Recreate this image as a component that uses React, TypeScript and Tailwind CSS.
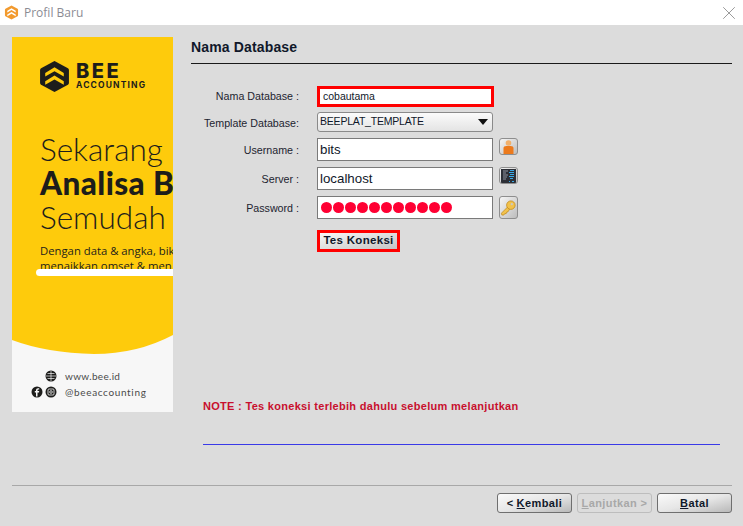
import React from 'react'
import { X } from 'lucide-react'

const arial = { fontFamily: '"Liberation Sans", Arial, sans-serif' }

function BeeMark({ size, body, chevron }: { size: number; body: string; chevron: string }) {
  return (
    <svg width={size} height={size} viewBox="0 0 32 32" className="shrink-0">
      <path d="M16 1 L29 8 Q30 8.600 30 10 L30 22 Q30 23.400 29 24 L16 31 L3 24 Q2 23.400 2 22 L2 10 Q2 8.600 3 8 Z" fill={body} />
      <path d="M16 7 L25 12.500 L25 16 L16 10.800 L7 16 L7 12.500 Z" fill={chevron} />
      <path d="M16 15 L25 20.500 L25 24 L16 18.800 L7 24 L7 20.500 Z" fill={chevron} />
    </svg>
  )
}

function UserIcon() {
  return (
    <svg width="11" height="14" viewBox="0 0 11 14">
      <circle cx="5.500" cy="3" r="2.800" fill="#f2b06a" />
      <path d="M0.500 14 L0.500 8 Q0.500 6 3.500 6 L7.500 6 Q10.500 6 10.500 8 L10.500 14 Z" fill="#ec7a1c" />
    </svg>
  )
}

function ServerIcon() {
  return (
    <svg width="15" height="14" viewBox="0 0 15 14">
      <rect width="15" height="14" fill="#2c2f36" />
      <path d="M2 2h5M2 4h3M2 6h5M2 8h4M2 10h3" stroke="#8d929c" strokeWidth="1" />
      <path d="M9 1.500h4M8 3.500h5M9 5.500h4M8 7.500h5M9 9.500h3M8 12.500h1M11 12.500h2" stroke="#39a9e6" strokeWidth="1" />
    </svg>
  )
}

function KeyIcon() {
  return (
    <svg width="18" height="18" viewBox="0 0 18 18">
      <path d="M8 8 L1.500 14.500 L2 16.500 L4 16.500 L5 15 L6.500 15 L7 13.500 L8.500 13 L10 10.500 Z" fill="#f2c24b" stroke="#c08a1e" strokeWidth="0.800" />
      <circle cx="11.500" cy="6" r="4.500" fill="#f2c24b" stroke="#c08a1e" strokeWidth="0.800" />
      <circle cx="12.500" cy="5" r="1.200" fill="#c9c9c9" />
    </svg>
  )
}

function SideButton({ children, tall }: { children: React.ReactNode; tall?: boolean }) {
  return (
    <div className={`w-[19px] ${tall ? 'h-[23px]' : 'h-[17px]'} self-start flex items-center justify-center overflow-hidden rounded-[3px] border border-[#8e8e8e] bg-gradient-to-br from-[#f6f6f6] to-[#bdbdbd] ml-[6px]`}>
      {children}
    </div>
  )
}

function Label({ children, nudge }: { children: React.ReactNode; nudge?: boolean }) {
  return (
    <div className={`w-[101px] text-right text-[10.700px] text-[#1d2430] pr-[1px] whitespace-nowrap ${nudge ? 'pt-[2px]' : ''}`}>
      {children}
    </div>
  )
}

function FieldRow({ label, value, icon, mt }: { label: string; value?: React.ReactNode; icon: React.ReactNode; mt: string }) {
  return (
    <div className={`flex items-center ${mt}`}>
      <Label nudge>{label}</Label>
      <div className="ml-[17px] w-[176px] h-[23px] border border-[#7a7a7a] bg-white flex items-center pl-[2px] text-[13.300px] text-[#10182a]">
        {value}
      </div>
      {icon}
    </div>
  )
}

function WizardButton({ children, w, disabled }: { children: React.ReactNode; w: string; disabled?: boolean }) {
  return (
    <div
      className={`${w} h-[20px] flex items-center justify-center rounded-[3px] border text-[11px] font-bold tracking-[0.4px] ${
        disabled
          ? 'border-[#bdbdbd] text-[#a8a8a8]'
          : 'border-[#6f6f6f] text-[#10182a] bg-gradient-to-br from-[#fafafa] via-[#e6e6e6] to-[#b9b9b9]'
      }`}
    >
      {children}
    </div>
  )
}

function Banner() {
  return (
    <div className="w-[161px] h-[375px] shrink-0 overflow-hidden bg-[#fecb0c] flex flex-col text-[#1d1d1b] whitespace-nowrap">
      <div className="flex items-center pl-[26px] pt-[23px]">
        <BeeMark size={33} body="#1d1d1b" chevron="#fecb0c" />
        <div className="ml-[5px]">
          <div className="text-[20px] leading-[18px] font-extrabold tracking-[2.500px]" style={{ fontFamily: 'Inter, sans-serif' }}>BEE</div>
          <div className="text-[8.500px] leading-[11px] font-bold tracking-[1.150px]" style={{ fontFamily: 'Inter, sans-serif' }}>ACCOUNTING</div>
        </div>
      </div>
      <div className="mt-[39px] pl-[28px] text-[31.500px] leading-[34px] overflow-hidden" style={{ fontFamily: 'Lato, sans-serif' }}>
        <div className="font-light">Sekarang</div>
        <div className="font-black tracking-[0.4px]">Analisa B</div>
        <div className="font-light">Semudah</div>
      </div>
      <div className="mt-[9px] pl-[28px] text-[11.300px] leading-[15px]" style={{ fontFamily: '"Open Sans", sans-serif' }}>
        <div>Dengan data &amp; angka, bik</div>
        <div>menaikkan omset &amp; men</div>
      </div>
      <div className="h-[7px] -mt-[4px] ml-[24px] rounded-l-full bg-white" />
      <svg viewBox="0 0 161 24" className="w-[161px] h-[24px] mt-auto shrink-0 block" preserveAspectRatio="none">
        <path d="M0 10 Q35 23 82 24 Q125 24 161 5 L161 24 L0 24 Z" fill="#f7f7f7" />
      </svg>
      <div className="h-[58px] shrink-0 bg-[#f7f7f7] text-[10px] text-[#4a4a4a] pt-[14px]" style={{ fontFamily: 'Lato, sans-serif' }}>
        <div className="flex items-center h-[16px] pl-[33px] tracking-[0.3px]">
          <svg width="12" height="12" viewBox="0 0 12 12" className="shrink-0">
            <circle cx="6" cy="6" r="5.500" fill="#1d1d1b" />
            <path d="M1 6h10M6 1v10M2.500 3.500h7M2.500 8.500h7" stroke="#f7f7f7" strokeWidth="0.700" />
          </svg>
          <span className="ml-[8px]">www.bee.id</span>
        </div>
        <div className="flex items-center h-[16px] pl-[19px] tracking-[0.65px]">
          <svg width="26" height="12" viewBox="0 0 26 12" className="shrink-0">
            <circle cx="6" cy="6" r="5.500" fill="#1d1d1b" />
            <path d="M6.500 10.500 V6.500 H8 L8.200 5 H6.500 V4.200 Q6.500 3.500 7.300 3.500 H8.200 V2.200 H7 Q5 2.200 5 4 V5 H3.800 V6.500 H5 V10.500 Z" fill="#f7f7f7" />
            <circle cx="20" cy="6" r="5.500" fill="#1d1d1b" />
            <rect x="17" y="3" width="6" height="6" rx="1" fill="none" stroke="#f7f7f7" strokeWidth="0.800" />
            <circle cx="20" cy="6" r="1.300" fill="none" stroke="#f7f7f7" strokeWidth="0.800" />
          </svg>
          <span className="ml-[8px]">@beeaccounting</span>
        </div>
      </div>
    </div>
  )
}

export default function App() {
  return (
    <div className="w-[743px] h-[526px] overflow-hidden flex flex-col bg-[#dcdcdc]" style={arial}>
      <div className="h-[25px] shrink-0 bg-white flex items-center pl-[4px] pr-[3px]">
        <BeeMark size={15} body="#f29a2e" chevron="#ffffff" />
        <span className="ml-[5px] text-[12px] text-[#8b8b93]" style={{ fontFamily: '"Open Sans", sans-serif' }}>Profil Baru</span>
        <X className="ml-auto text-[#6e6e6e]" size={22} strokeWidth={0.75} />
      </div>

      <div className="flex-1 min-h-0 flex pl-[12px] pr-[11px] pt-[12px]">
        <Banner />
        <div className="flex-1 ml-[18px] flex flex-col">
          <div className="h-[27px] border-b border-[#1a1a1a] text-[14px] tracking-[0.15px] font-bold text-[#10182a] leading-[20px]">Nama Database</div>

          <div className="mt-[22px] pl-[8px] w-[340px]">
            <div className="flex items-center">
              <Label>Nama Database :</Label>
              <div className="ml-[17px] w-[177px] h-[21px] border-[3px] border-[#ff0000] bg-white flex items-center pl-[3px] text-[10.500px] text-[#10182a]">
                cobautama
              </div>
            </div>
            <div className="flex items-center mt-[5px]">
              <Label nudge>Template Database:</Label>
              <div className="ml-[17px] w-[176px] h-[20px] rounded-[3px] border border-[#8a8a8a] bg-gradient-to-b from-[#fbfbfb] to-[#e4e4e4] flex items-center pl-[2px] pr-[4px] text-[10.500px] tracking-[-0.2px] text-[#10182a]">
                BEEPLAT_TEMPLATE
                <svg width="10" height="6" viewBox="0 0 10 6" className="ml-auto">
                  <path d="M0 0 H10 L5 6 Z" fill="#111111" />
                </svg>
              </div>
            </div>
            <FieldRow label="Username :" value="bits" mt="mt-[6px]" icon={<SideButton><UserIcon /></SideButton>} />
            <FieldRow label="Server :" value="localhost" mt="mt-[6px]" icon={<SideButton><ServerIcon /></SideButton>} />
            <FieldRow
              label="Password :"
              mt="mt-[6px]"
              value={
                <span className="flex gap-[1px] pl-[1px]">
                  {Array.from({ length: 11 }).map((_, i) => (
                    <span key={i} className="w-[11px] h-[11px] rounded-full bg-[#ff0033]" />
                  ))}
                </span>
              }
              icon={<SideButton tall><KeyIcon /></SideButton>}
            />
            <div className="mt-[11px] ml-[118px] w-[83px] h-[22px] border-[3px] border-[#ff0000] bg-gradient-to-br from-[#f8f8f8] to-[#c4c4c4] flex items-center justify-center text-[11.500px] font-bold tracking-[0.3px] text-[#10182a]">
              Tes Koneksi
            </div>
          </div>

          <div className="mt-[146px] ml-[12px] text-[11px] font-bold tracking-[0.3px] text-[#c8102e]">
            NOTE : Tes koneksi terlebih dahulu sebelum melanjutkan
          </div>
          <div className="mt-[29px] ml-[12px] mr-[12px] h-[1px] bg-[#3a3ae8]" />
        </div>
      </div>

      <div className="h-[41px] shrink-0 ml-[12px] mr-[11px] border-t border-[#a8a8a8] flex justify-end gap-[5px] pt-[7px]">
        <WizardButton w="w-[75px]">&lt; <span className="underline ml-[3px]">K</span>embali</WizardButton>
        <WizardButton w="w-[75px]" disabled><span className="underline">L</span>anjutkan &gt;</WizardButton>
        <WizardButton w="w-[75px]"><span className="underline">B</span>atal</WizardButton>
      </div>
    </div>
  )
}
